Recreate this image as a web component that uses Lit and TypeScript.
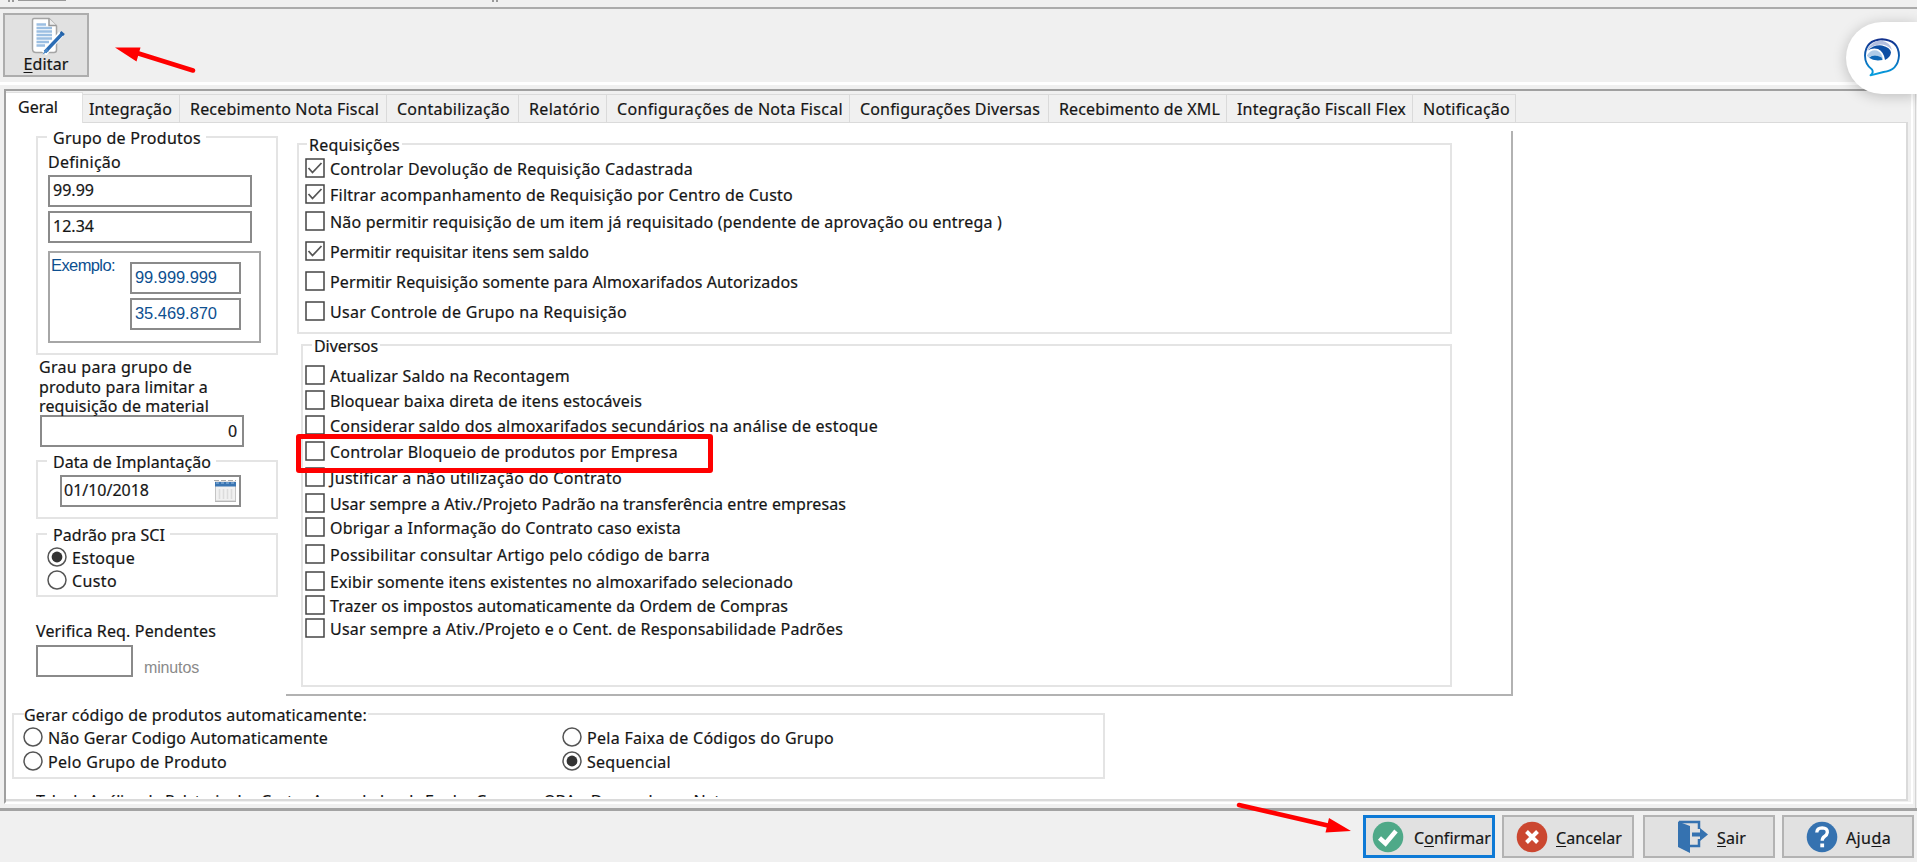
import { LitElement, html, css, svg } from "lit";
import { customElement, property } from "lit/decorators.js";

/** Text run tracked so that it fills a given width; "&" marks the access key. */
@customElement("fit-text")
class FitText extends LitElement {
  @property() text = "";
  @property({ type: Number }) w = 0;
  static styles = css`
    :host { display: inline-block; white-space: pre; }
    u { text-decoration: underline; text-underline-offset: 2px; text-decoration-thickness: 1px; text-decoration-skip-ink: none; }
  `;
  firstUpdated() {
    const s = this.renderRoot.querySelector("span") as HTMLElement;
    const n = (s.textContent || "").length;
    const natural = s.getBoundingClientRect().width;
    if (n && this.w) s.style.letterSpacing = (this.w + 1 - natural) / n + "px";
  }
  render() {
    const i = this.text.indexOf("&");
    return i < 0
      ? html`<span>${this.text}</span>`
      : html`<span>${this.text.slice(0, i)}<u>${this.text[i + 1]}</u>${this.text.slice(i + 2)}</span>`;
  }
}

const t = (text: string, w: number) => html`<fit-text .text=${text} .w=${w}></fit-text>`;

const TABS: [string, number, number, number][] = [
  ["Integração", 82, 97, 6],
  ["Recebimento Nota Fiscal", 188, 207, 10],
  ["Contabilização", 112, 132, 10],
  ["Relatório", 70, 88, 10],
  ["Configurações de Nota Fiscal", 225, 243, 10],
  ["Configurações Diversas", 179, 199, 10],
  ["Recebimento de XML", 160, 178, 10],
  ["Integração Fiscall Flex", 168, 186, 10],
  ["Notificação", 86, 103, 10],
];

const REQ: [string, number, number, boolean][] = [
  ["Controlar Devolução de Requisição Cadastrada", 362, 3, true],
  ["Filtrar acompanhamento de Requisição por Centro de Custo", 462, 6, true],
  ["Não permitir requisição de um item já requisitado (pendente de aprovação ou entrega )", 671, 7, false],
  ["Permitir requisitar itens sem saldo", 258, 10, true],
  ["Permitir Requisição somente para Almoxarifados Autorizados", 467, 10, false],
  ["Usar Controle de Grupo na Requisição", 296, 10, false],
];

const DIV: [string, number, number, boolean][] = [
  ["Atualizar Saldo na Recontagem", 239, 9, false],
  ["Bloquear baixa direta de itens estocáveis", 311, 5, false],
  ["Considerar saldo dos almoxarifados secundários na análise de estoque", 547, 5, false],
  ["Controlar Bloqueio de produtos por Empresa", 347, 6, false],
  ["Justificar a não utilização do Contrato", 291, 6, false],
  ["Usar sempre a Ativ./Projeto Padrão na transferência entre empresas", 515, 6, false],
  ["Obrigar a Informação do Contrato caso exista", 350, 4, false],
  ["Possibilitar consultar Artigo pelo código de barra", 379, 7, false],
  ["Exibir somente itens existentes no almoxarifado selecionado", 462, 7, false],
  ["Trazer os impostos automaticamente da Ordem de Compras", 457, 4, false],
  ["Usar sempre a Ativ./Projeto e o Cent. de Responsabilidade Padrões", 512, 3, false],
];

const check = ([label, w, gap, on]: [string, number, number, boolean]) => html`
  <label class="row" style="margin-top:${gap}px">
    <svg width="20" height="20" viewBox="0 0 20 20">
      <rect x="1" y="1" width="18" height="18" fill="#fff" stroke="#444" stroke-width="1.5" />
      ${on ? svg`<path d="M3.5 10 L7.5 14.5 L16.5 5" fill="none" stroke="#555" stroke-width="1.8"/>` : ""}
    </svg>
    ${t(label, w)}
  </label>`;

const radio = (label: string, w: number, on: boolean) => html`
  <label class="row">
    <svg width="20" height="20" viewBox="0 0 20 20">
      <circle cx="10" cy="10" r="9" fill="#fff" stroke="#555" stroke-width="1.5" />
      ${on ? svg`<circle cx="10" cy="10" r="5.4" fill="#333"/>` : ""}
    </svg>
    ${t(label, w)}
  </label>`;

const docIcon = html`<svg width="36" height="38" viewBox="0 0 36 38">
  <path d="M4 1.500H19L26.500 9V33Q26.500 35.500 24 35.500H6Q2.500 35.500 2.500 32V3.500Q2.500 1.500 4 1.500Z" fill="#fff" stroke="#a5a5a5" stroke-width="1.500"/>
  <path d="M19 1.500V8.500H26.500" fill="#eee" stroke="#999" stroke-width="1.500"/>
  <path d="M6.500 7.500H16M6.500 11H22M6.500 14.500H22M6.500 18H22M6.500 21.500H22M6.500 25H19M6.500 28.500H15" stroke="#9cbfe2" stroke-width="2.300"/>
  <path d="M31.500 16.500L14 36.500" stroke="#fff" stroke-width="6"/>
  <path d="M32 17L15 35" stroke="#2c6db5" stroke-width="3.400"/>
  <path d="M16.500 31L12.500 37.500L19 34Z" fill="#4a87c6"/>
  <path d="M30.500 15L34 18" stroke="#2362a8" stroke-width="2.500"/>
</svg>`;

const calendarIcon = html`<svg width="23" height="24" viewBox="0 0 23 24">
  <path d="M0 1.500H22" stroke="#aaa" stroke-width="1" stroke-dasharray="5 2"/>
  <rect x="1.500" y="3" width="20" height="19" fill="#f1f1f1" stroke="#c4c4c4"/>
  <rect x="1" y="3" width="21" height="4.500" fill="#3a75b2"/>
  <path d="M2 4H21" stroke="#9dbfe0" stroke-dasharray="3 2"/>
  <path d="M5.500 10V20M9.500 10V20M13.500 10V20M17.500 10V20" stroke="#dcdcdc" stroke-width="1.500"/>
  <path d="M1 22.500H22" stroke="#b5b5b5"/>
</svg>`;

const okIcon = html`<svg width="32" height="32" viewBox="0 0 32 32"><circle cx="16" cy="16" r="15.300" fill="#4fa988"/><path d="M7.500 17L13.500 22.500L24 10" fill="none" stroke="#fff" stroke-width="4.500"/></svg>`;
const cancelIcon = html`<svg width="32" height="32" viewBox="0 0 32 32"><circle cx="16" cy="16" r="15.300" fill="#cb4730"/><path d="M10.500 10.500L21.500 21.500M21.500 10.500L10.500 21.500" stroke="#fff" stroke-width="4"/></svg>`;
const exitIcon = html`<svg width="32" height="34" viewBox="0 0 32 34">
  <path d="M1 1.500L13 6V33L1 27Z" fill="#3572b0"/>
  <path d="M2 2H22V9M22 19V26H13" fill="none" stroke="#3572b0" stroke-width="2.500"/>
  <path d="M15 12.500H23V8L31 14.500L23 21V16.500H15Z" fill="#3572b0"/></svg>`;
const helpIcon = html`<svg width="32" height="32" viewBox="0 0 32 32"><circle cx="16" cy="16" r="15.300" fill="#3572b0"/><path d="M10.800 11.500Q11 6.800 16.200 6.800Q21.500 7 21.300 11.500Q21 14 18.500 15.500Q16.200 17 16.200 19.800" fill="none" stroke="#fff" stroke-width="3.300"/><rect x="14.300" y="22.500" width="3.800" height="3.800" fill="#fff"/></svg>`;

const chatIcon = html`<svg width="38" height="40" viewBox="0 0 38 40">
  <defs><linearGradient id="g" x1="0" y1="0" x2="0" y2="1"><stop offset="0" stop-color="#12308c"/><stop offset=".55" stop-color="#0a68b8"/><stop offset="1" stop-color="#06a0e0"/></linearGradient></defs>
  <path d="M9 32.500Q2 27.500 2 18.500Q2.500 3 19 2.200Q35.500 3 36 18.500Q35 33.500 20.500 35L7.500 38.300Q11 35.500 9 32.500Z" fill="#fff" stroke="url(#g)" stroke-width="1.900" stroke-linejoin="round"/>
  <path d="M3.500 14Q8 4 18 3.500Q27.500 5 29 13Q22 6 14 8Q8 9 3.500 14Z" fill="#b3bfe0"/>
  <path d="M4.500 13.500Q11 7.500 19 8.500Q27.500 10.500 28 15.500Q27.500 20 22 23Q21 15 15 12Q9.500 10.500 4.500 13.500Z" fill="#0d4ea4"/>
  <path d="M3.800 18.500Q8 12 14 13.500Q19.500 16 20 23Q13 15.500 5.500 20.500Z" fill="#b0cbe8"/>
  <path d="M6 20.800Q11 16.500 18.500 20.500L19.500 23Q11 24.500 6 20.800Z" fill="#0f66b5"/>
</svg>`;

@customElement("app-root")
class AppRoot extends LitElement {
  static styles = css`
    * { box-sizing: border-box; }
    :host { display: flex; flex-direction: column; position: relative; width: 1917px; height: 862px; overflow: hidden; background: #f0f0f0; font: 16px/20px "Noto Sans", "Open Sans", sans-serif; color: #151515; -webkit-text-stroke: .2px currentColor; }
    svg { display: block; flex: none; }
    .strip { height: 9px; border-bottom: 2px solid #ababab; display: flex; padding-left: 8px; }
    .strip i { width: 2px; height: 2px; background: #999; margin-right: 2px; }
    .strip b { width: 48px; height: 1px; background: #999; margin: 0 426px 0 2px; }
    .toolbar { height: 73px; padding: 4px 0 0 3px; }
    .edit { width: 86px; height: 64px; border: 2px solid #adadad; background: #e1e1e1; display: flex; flex-direction: column; align-items: center; }
    .edit svg { margin: 2px 0 0 4px; }
    .edit fit-text { margin-top: -1px; }
    .band { height: 3px; background: #fff; }
    .outer { height: 723px; padding: 4px 2px 0 4px; border-right: 1px solid #d4d4d4; margin-right: 1px; }
    .frame { height: 715px; width: 1909px; border: 2px solid #fff; border-top-color: #a0a0a0; border-left-color: #a0a0a0; }
    .tabs { height: 31px; display: flex; align-items: flex-end; }
    .tab { height: 28px; border: 1px solid #dadada; border-left-width: 0; border-bottom: 0; padding-top: 4px; }
    .tab.sel { height: 31px; width: 77px; border: 1px solid #e0e0e0; border-bottom: 0; border-left: 0; background: #fff; padding: 4px 0 0 12px; margin-bottom: -1px; position: relative; }
    .pane { width: 1902px; height: 679px; background: #fff; border: solid #dadada; border-width: 1px 2px 2px 0; }
    .upper { display: flex; }
    .left { width: 280px; padding: 13px 8px 0 30px; }
    .right { width: 1227px; height: 565px; margin-top: 8px; border: solid #b2b2b2; border-width: 0 2px 2px 0; padding-top: 12px; position: relative; }
    .group { border: 2px solid #e4e4e4; }
    .legend { display: block; width: fit-content; background: #fff; margin: -10px 0 0 9px; padding: 0 5px 0 6px; height: 20px; }
    .row { display: flex; gap: 5px; height: 20px; line-height: 22px; width: fit-content; }
    .input { display: block; border: 2px solid #8a8a8a; background: #fff; height: 32px; padding: 3px 3px 0; line-height: 20px; }
    .g1 { height: 219px; }
    .g1 .lab { display: block; margin: 4px 0 3px 10px; height: 20px; }
    .g1 > .input { width: 204px; margin: 0 0 4px 10px; }
    .sample { display: flex; width: 213px; height: 92px; margin: 8px 0 0 10px; border: 2px solid #a6a6a6; color: #0d4f90; font-family: "Liberation Sans", sans-serif; font-size: 16.500px; padding: 2px 0 0 1px; -webkit-text-stroke: 0; }
    .sample > fit-text { width: 79px; }
    .sample .col { display: flex; flex-direction: column; gap: 4px; margin-top: 7px; }
    .sample .input { width: 111px; padding-top: 3px; }
    .grau { display: flex; flex-direction: column; margin: 3px 0 0 3px; line-height: 19.500px; }
    .grau fit-text { height: 19.500px; }
    .num { width: 204px; margin: -2px 0 0 4px; text-align: right; padding-right: 4px; padding-top: 4px; }
    .g2 { height: 59px; margin-top: 13px; }
    .date { width: 181px; margin: 3px 0 0 22px; display: flex; justify-content: space-between; padding: 3px 2px 0 2px; height: 32px; }
    .date svg { margin-top: -1px; }
    .g3 { height: 64px; margin-top: 14px; display: flex; flex-direction: column; gap: 3px; padding-left: 9px; }
    .g3 .legend { margin: -10px 0 -1px 0; }
    .verifica { display: block; margin-top: 24px; height: 20px; }
    .mins { display: flex; gap: 11px; margin-top: 4px; }
    .mins .input { width: 97px; }
    .mins > fit-text { margin-top: 13px; color: #8a8a8a; font-family: "Liberation Sans", sans-serif; font-size: 16px; -webkit-text-stroke: 0; }
    .req { margin-left: 11px; width: 1155px; height: 191px; }
    .req .legend { margin-left: 8px; padding: 0 2px; }
    .req .row { margin-left: 6px; }
    .div { margin: 10px 0 0 15px; width: 1151px; height: 343px; }
    .div .legend { padding: 0 2px; }
    .div .row { margin-left: 2px; }
    .gerar { margin: 17px 0 0 6px; width: 1093px; height: 66px; }
    .gerar .legend { margin-left: 10px; padding: 0 1px 0 0; }
    .opts { display: grid; grid-template-columns: 539px 1fr; row-gap: 4px; padding: 2px 0 0 9px; }
    .cut { height: 6px; overflow: hidden; margin: 12px 0 0 30px; }
    .footer { border-top: 3px solid #a3a3a3; height: 54px; display: flex; justify-content: flex-end; padding: 4px 3px 0 0; }
    .btn { width: 132px; height: 43px; border: 2px solid #b3b3b3; background: #e1e1e1; display: flex; align-items: center; }
    .btn.def { border: 3px solid #0e7ad6; }
    .btn fit-text { margin-top: 2px; }
    .hl { position: absolute; left: 10px; top: 303px; width: 417px; height: 39px; border: 5px solid #f00; border-radius: 3px; }
    .arrows { position: absolute; left: 0; top: 0; pointer-events: none; }
    .chat { position: absolute; left: 1846px; top: 22px; width: 71px; height: 72px; background: #fff; border-radius: 36px 0 0 36px; box-shadow: 0 2px 14px rgba(0,0,0,.22); padding: 15px 0 0 17px; }
  `;
  render() {
    return html`
      <div class="strip"><i></i><i></i><b></b><i></i><i></i></div>
      <div class="toolbar"><div class="edit">${docIcon}${t("&Editar", 44)}</div></div>
      <div class="band"></div>
      <div class="outer"><div class="frame">
        <div class="tabs">
          <div class="tab sel">${t("Geral", 39)}</div>
          ${TABS.map(([n, w, tw, p]) => html`<div class="tab" style="width:${tw}px;padding-left:${p}px">${t(n, w)}</div>`)}
        </div>
        <div class="pane">
          <div class="upper">
            <div class="left">
              <div class="group g1">
                <div class="legend">${t("Grupo de Produtos", 147)}</div>
                <div class="lab">${t("Definição", 72)}</div>
                <div class="input">${t("99.99", 40)}</div>
                <div class="input">${t("12.34", 40)}</div>
                <div class="sample">${t("Exemplo:", 63)}
                  <div class="col"><div class="input">${t("99.999.999", 81)}</div><div class="input">${t("35.469.870", 81)}</div></div>
                </div>
              </div>
              <div class="grau">${t("Grau para grupo de", 152)}${t("produto para limitar a", 168)}${t("requisição de material", 169)}</div>
              <div class="input num">${t("0", 9)}</div>
              <div class="group g2">
                <div class="legend">${t("Data de Implantação", 157)}</div>
                <div class="input date">${t("01/10/2018", 84)}${calendarIcon}</div>
              </div>
              <div class="group g3">
                <div class="legend">${t("Padrão pra SCI", 111)}</div>
                ${radio("Estoque", 62, true)}${radio("Custo", 44, false)}
              </div>
              <div class="verifica">${t("Verifica Req. Pendentes", 179)}</div>
              <div class="mins"><div class="input"></div>${t("minutos", 54)}</div>
            </div>
            <div class="right">
              <div class="group req"><div class="legend">${t("Requisições", 90)}</div>${REQ.map(check)}</div>
              <div class="group div"><div class="legend">${t("Diversos", 63)}</div>${DIV.map(check)}</div>
              <div class="hl"></div>
            </div>
          </div>
          <div class="group gerar">
            <div class="legend">${t("Gerar código de produtos automaticamente:", 342)}</div>
            <div class="opts">
              ${radio("Não Gerar Codigo Automaticamente", 279, false)}${radio("Pela Faixa de Códigos do Grupo", 246, false)}
              ${radio("Pelo Grupo de Produto", 178, false)}${radio("Sequencial", 83, true)}
            </div>
          </div>
          <div class="cut">${t("Tela de Análise do Relatorio dos Custos Acumulados de Fardos Compras OBA e Demandas ou Notas", 698)}</div>
        </div>
      </div></div>
      <div class="footer">
        <div class="btn def" style="padding-left:6px;gap:10px;margin-right:7px">${okIcon}${t("C&onfirmar", 76)}</div>
        <div class="btn" style="padding-left:12px;gap:8px;margin-right:9px">${cancelIcon}${t("&Cancelar", 65)}</div>
        <div class="btn" style="padding-left:32px;gap:8px;margin-right:7px">${exitIcon}${t("&Sair", 28)}</div>
        <div class="btn" style="padding-left:22px;gap:8px">${helpIcon}${t("Aju&da", 44)}</div>
      </div>
      <svg class="arrows" width="1917" height="862" viewBox="0 0 1917 862">
        <path d="M137 53L193 70.500M1239 805L1330 826" stroke="#f00" stroke-width="4.500" stroke-linecap="round"/>
        <path d="M115 47.500L140.500 47.500L136.500 61.500ZM1351 831L1329 818L1325.500 832.500Z" fill="#f00"/>
      </svg>
      <div class="chat">${chatIcon}</div>
    `;
  }
}
